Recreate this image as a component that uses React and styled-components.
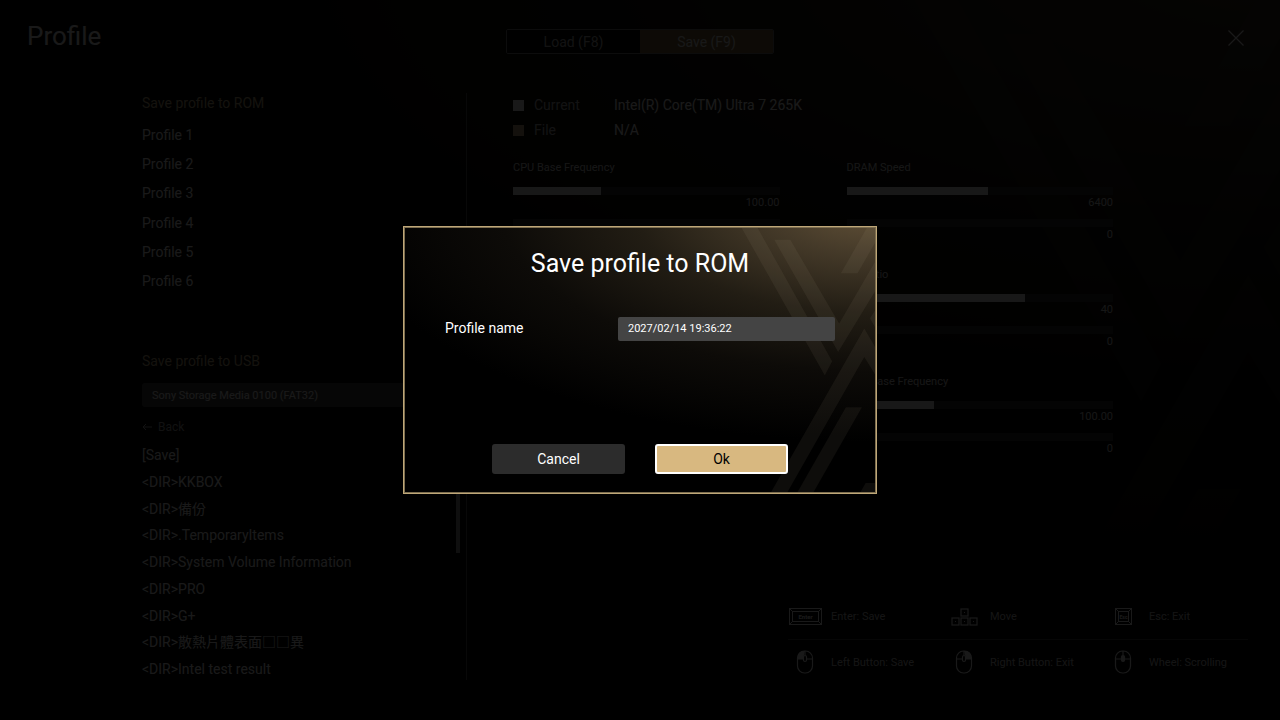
import React, { useState } from 'react';
import styled, { createGlobalStyle } from 'styled-components';

const GlobalStyle = createGlobalStyle`
  * { box-sizing: border-box; }
  body { margin: 0; background: #000; color: #fff; font-family: Roboto, "Noto Sans CJK TC", sans-serif; font-size: 14px; }
  button, input, select { font: inherit; color: inherit; }
  h1, h2, ul { margin: 0; padding: 0; font-weight: 400; list-style: none; }
`;

const Page = styled.div`position: relative; display: flex; flex-direction: column; min-height: 100vh;`;
const Art = styled.svg`position: absolute; inset: 0; z-index: -1; width: 100%; height: 100%; opacity: ${(p) => (p.$dim ? 0.6 : 1)};`;
const Header = styled.header`display: grid; grid-template-columns: 1fr 268px 1fr; height: 93px; padding: 21px 27px 0;`;
const PageTitle = styled.h1`font-size: 26px; line-height: 30px;`;
const Tabs = styled.div`display: flex; height: 25px; margin-top: 8px; border: 1px solid #777; border-radius: 2px; overflow: hidden;`;
const Tab = styled.button`flex: 1; padding: 0; border: 0; background: ${(p) => (p.$on ? '#80683c' : '#000')}; color: ${(p) => (p.$on ? '#eee' : '#bbb')};`;
const Close = styled.button`justify-self: end; align-self: start; width: 18px; height: 18px; margin: 8px 8px 0 0; padding: 0; border: 0; background: none; svg { display: block; }`;

const Main = styled.main`display: grid; grid-template-columns: 325px 1fr; flex: 1; padding: 0 167px 40px 142px;`;
const Side = styled.aside`display: flex; flex-direction: column; border-right: 1px solid #555; padding-right: 6px;`;
const Heading = styled.h2`font-size: 14px; line-height: 20px; color: #c5b38a;`;
const Slots = styled.ul`display: grid; grid-auto-rows: 1fr; align-items: center; height: 176px; margin: 7px 0 55px;`;
const Drive = styled.select`appearance: none; width: 100%; height: 24px; margin-top: 12px; padding: 0 10px; border: 0; border-radius: 3px; background: #444; font-size: 11px;`;
const Back = styled.button`display: flex; align-items: center; gap: 6px; align-self: start; margin: 12px 0 10px; padding: 0; border: 0; background: none; color: #aaa; font-size: 12px; line-height: 16px;`;
const Files = styled.div`display: flex; flex: 1; justify-content: space-between; padding-bottom: 1px;`;
const FileList = styled.ul`display: flex; flex-direction: column; justify-content: space-between; line-height: 20px;`;
const Thumb = styled.div`width: 4px; height: 108px; background: #999;`;

const Info = styled.section`padding: 0 0 0 46px;`;
const Legend = styled.div`display: grid; grid-template-columns: 11px 70px 1fr; column-gap: 10px; align-items: center; line-height: 25px;`;
const Swatch = styled.span`width: 11px; height: 11px; background: ${(p) => (p.$gold ? '#c8ad80' : '#fff')};`;
const Label = styled.span`color: #bbb;`;
const Meters = styled.div`display: grid; grid-template-columns: 1fr 1fr; column-gap: 67px; margin-top: 17px; font-size: 11px;`;
const Meter = styled.div`height: 80px; margin-bottom: 27px; line-height: 16px; color: #ddd;`;
const Track = styled.div`height: 8px; margin-top: ${(p) => (p.$first ? 11 : 8)}px; background: #2a2a2a;`;
const Fill = styled.div`height: 100%; background: #f2f2f2;`;
const Value = styled.div`text-align: right;`;

const Help = styled.footer`position: absolute; right: 32px; bottom: 36px; width: 460px; color: #ccc; font-size: 11px;`;
const HelpRow = styled.div`display: grid; grid-template-columns: 159px 159px 1fr; height: 45px; & + & { border-top: 1px solid #444; }`;
const HelpItem = styled.div`display: grid; grid-template-columns: 34px 1fr; gap: 9px; align-items: center; svg { justify-self: center; }`;

const Shade = styled.div`position: fixed; inset: 0; display: grid; place-items: center; background: rgba(0, 0, 0, 0.9);`;
const Dialog = styled.form`position: relative; z-index: 0; display: flex; flex-direction: column; width: 474px; height: 268px; padding: 20px 41px 19px; border: 1px solid #bfa778; outline: 1px solid #7d6e50; outline-offset: -2px; background: #000;`;
const DialogTitle = styled.h2`font-size: 25px; line-height: 34px; text-align: center;`;
const Field = styled.div`display: flex; justify-content: space-between; align-items: center; margin-top: 36px;`;
const FieldLabel = styled.label`padding-bottom: 2px;`;
const NameInput = styled.input`width: 217px; height: 24px; padding: 0 10px 2px; border: 0; border-radius: 2px; background: #444; font-size: 11px; outline: none;`;
const Actions = styled.div`display: flex; justify-content: center; gap: 30px; margin-top: auto;`;
const Action = styled.button`width: 133px; height: 30px; padding: 0; border: 2px solid ${(p) => (p.$primary ? '#fff' : '#2c2c2c')}; border-radius: 3px; background: ${(p) => (p.$primary ? '#d8b880' : '#2c2c2c')}; color: ${(p) => (p.$primary ? '#000' : '#fff')};`;

const profiles = ['Profile 1', 'Profile 2', 'Profile 3', 'Profile 4', 'Profile 5', 'Profile 6'];
const files = ['[Save]', '<DIR>KKBOX', '<DIR>備份', '<DIR>.TemporaryItems', '<DIR>System Volume Information', '<DIR>PRO', '<DIR>G+', '<DIR>散熱片體表面□□異', '<DIR>Intel test result'];
const meterColumns = [
  [
    { name: 'CPU Base Frequency', value: '100.00', fill: 33 },
  ],
  [
    { name: 'DRAM Speed', value: '6400', fill: 53 },
    { name: 'GT Ratio', value: '40', fill: 67 },
    { name: 'SOC Base Frequency', value: '100.00', fill: 33 },
  ],
];

const Backdrop = ({ id, dim }) => (
  <Art $dim={dim} viewBox="0 0 1410 792" preserveAspectRatio="none" aria-hidden="true">
    <defs>
      <radialGradient id={id} gradientUnits="userSpaceOnUse" cx="0" cy="0" r="1" gradientTransform="translate(1410 -60) scale(1600 700)">
        <stop offset="0" stopColor="#645339" />
        <stop offset="0.2" stopColor="#453a29" />
        <stop offset="0.45" stopColor="#221d14" />
        <stop offset="0.7" stopColor="#0d0b08" />
        <stop offset="1" stopColor="#000" />
      </radialGradient>
    </defs>
    <rect width="1410" height="792" fill={`url(#${id})`} />
    <g fill="#cbb995" fillOpacity="0.07">
      <path d="M1007 0h48l224 400-22 42z" />
      <path d="M1106 38h48l146 249 110-188v88l-113 185z" />
      <path d="M1384 0h26v42l-55 96h-50z" />
      <path d="M1392 272l18-28v60z" />
      <path d="M1375 302l35 60v82l-35-57-231 405h-49z" />
      <path d="M1320 537h48l-146 255h-48z" />
      <path d="M1379 762h31v30h-48z" />
    </g>
  </Art>
);

const Mouse = ({ button }) => (
  <svg width="18" height="24" viewBox="0 0 18 24" fill="none" stroke="#fff" strokeWidth="1.2">
    <rect x="1.5" y="1" width="15" height="22" rx="7" />
    <path d="M1.5 9h5.500M11 9h5.500M9 1v4" />
    {button === 'left' && <path d="M8 1.500C4 1.500 2 4 2 8.500h5V6z" fill="#fff" />}
    {button === 'right' && <path d="M10 1.500c4 0 6 2.500 6 7h-5V6z" fill="#fff" />}
    <rect x="7.500" y="5.500" width="3" height="6" rx="1.500" fill={button === 'wheel' ? '#fff' : 'none'} />
  </svg>
);

const Key = ({ wide, children }) => {
  const w = wide ? 33 : 17;
  return (
    <svg width={w} height="17" viewBox={`0 0 ${w} 17`} fill="none" stroke="#fff">
      <rect x="0.5" y="0.5" width={w - 1} height="16" />
      <rect x="3.5" y="3.5" width={w - 7} height="10" />
      <path d={`M.5.5l3 3M${w - 0.5}.5l-3 3M.5 16.500l3-3M${w - 0.5} 16.500l-3-3`} />
      <text x={w / 2} y="11" textAnchor="middle" fontSize={wide ? 6 : 5} fontWeight="700" fill="#fff" stroke="none">{children}</text>
    </svg>
  );
};

const Arrows = () => (
  <svg width="27" height="18" viewBox="0 0 27 18" fill="none" stroke="#fff" strokeWidth="1.2">
    {[[10, 1], [1, 10], [10, 10], [19, 10]].map(([x, y]) => (
      <g key={`${x}-${y}`}>
        <rect x={x} y={y} width="7" height="7" />
        <rect x={x + 3} y={y + 3} width="1" height="1" fill="#fff" stroke="none" />
      </g>
    ))}
  </svg>
);

const App = () => {
  const [name, setName] = useState('2027/02/14 19:36:22');

  return (
    <>
      <GlobalStyle />
      <Page>
        <Backdrop id="pageGlow" dim />
        <Header>
          <PageTitle>Profile</PageTitle>
          <Tabs>
            <Tab type="button">Load (F8)</Tab>
            <Tab type="button" $on>Save (F9)</Tab>
          </Tabs>
          <Close type="button" aria-label="Close">
            <svg width="18" height="18" viewBox="0 0 18 18" stroke="#fff" strokeWidth="1.2"><path d="M1.500 1.500l15 15M16.500 1.500l-15 15" /></svg>
          </Close>
        </Header>
        <Main>
          <Side>
            <Heading>Save profile to ROM</Heading>
            <Slots>
              {profiles.map((item) => <li key={item}>{item}</li>)}
            </Slots>
            <Heading>Save profile to USB</Heading>
            <Drive aria-label="USB drive">
              <option>Sony Storage Media 0100 (FAT32)</option>
            </Drive>
            <Back type="button">
              <svg width="10" height="8" viewBox="0 0 10 8" fill="none" stroke="#bbb"><path d="M10 4H1M4 1L1 4l3 3" /></svg>
              Back
            </Back>
            <Files>
              <FileList>
                {files.map((item) => <li key={item}>{item}</li>)}
              </FileList>
              <Thumb />
            </Files>
          </Side>
          <Info>
            <Legend>
              <Swatch />
              <Label>Current</Label>
              <span>Intel(R) Core(TM) Ultra 7 265K</span>
              <Swatch $gold />
              <Label>File</Label>
              <span>N/A</span>
            </Legend>
            <Meters>
              {meterColumns.map((column) => (
                <div key={column[0].name}>
                  {column.map((m) => (
                    <Meter key={m.name}>
                      {m.name}
                      <Track $first><Fill style={{ width: `${m.fill}%` }} /></Track>
                      <Value>{m.value}</Value>
                      <Track />
                      <Value>0</Value>
                    </Meter>
                  ))}
                </div>
              ))}
            </Meters>
          </Info>
        </Main>
        <Help>
          <HelpRow>
            <HelpItem><Key wide>Enter</Key>Enter: Save</HelpItem>
            <HelpItem><Arrows />Move</HelpItem>
            <HelpItem><Key>Esc</Key>Esc: Exit</HelpItem>
          </HelpRow>
          <HelpRow>
            <HelpItem><Mouse button="left" />Left Button: Save</HelpItem>
            <HelpItem><Mouse button="right" />Right Button: Exit</HelpItem>
            <HelpItem><Mouse button="wheel" />Wheel: Scrolling</HelpItem>
          </HelpRow>
        </Help>
      </Page>
      <Shade>
        <Dialog role="dialog" aria-labelledby="dialogTitle" onSubmit={(e) => e.preventDefault()}>
          <Backdrop id="dialogGlow" />
          <DialogTitle id="dialogTitle">Save profile to ROM</DialogTitle>
          <Field>
            <FieldLabel htmlFor="profileName">Profile name</FieldLabel>
            <NameInput id="profileName" value={name} onChange={(e) => setName(e.target.value)} />
          </Field>
          <Actions>
            <Action type="button">Cancel</Action>
            <Action type="submit" $primary>Ok</Action>
          </Actions>
        </Dialog>
      </Shade>
    </>
  );
};

export default App;
